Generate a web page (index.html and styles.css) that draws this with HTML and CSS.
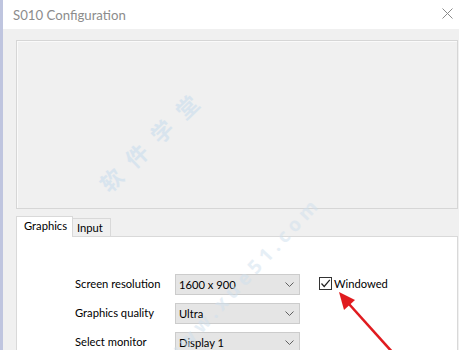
FILE: index.html
```html
<!DOCTYPE html>
<html>
<head>
<meta charset="utf-8">
<link rel="stylesheet" href="styles.css">
</head>
<body>
<div class="window">
  <div class="titlebar">
    <span class="title">S010 Configuration</span>
    <svg class="close" width="11" height="11" viewBox="0 0 11 11"><path d="M0.5 0.5 L10.5 10.5 M10.5 0.5 L0.5 10.5" stroke="#8a8a8a" stroke-width="1" fill="none"/></svg>
  </div>
  <div class="client">
    <div class="preview"></div>
    <div class="tabs">
      <div class="tabstrip">
        <div class="tab active">Graphics</div>
        <div class="tab">Input</div>
      </div>
      <div class="page">
        <div class="form">
          <span class="label">Screen resolution</span>
          <div class="combo"><span>1600 x 900</span><svg width="9" height="5" viewBox="0 0 9 5"><path d="M0.5 0.5 L4.5 4.5 L8.5 0.5" stroke="#606060" fill="none"/></svg></div>
          <label class="check"><span class="box"><svg width="11" height="11" viewBox="0 0 11 11"><path d="M1.5 5.5 L4.2 8.5 L9.8 1.8" stroke="#222" stroke-width="1.2" fill="none"/></svg></span>Windowed</label>
          <span class="label">Graphics quality</span>
          <div class="combo"><span>Ultra</span><svg width="9" height="5" viewBox="0 0 9 5"><path d="M0.5 0.5 L4.5 4.5 L8.5 0.5" stroke="#606060" fill="none"/></svg></div>
          <span></span>
          <span class="label">Select monitor</span>
          <div class="combo"><span>Display 1</span><svg width="9" height="5" viewBox="0 0 9 5"><path d="M0.5 0.5 L4.5 4.5 L8.5 0.5" stroke="#606060" fill="none"/></svg></div>
          <span></span>
        </div>
      </div>
    </div>
  </div>
  <div class="wm wm-cn">软件学堂</div>
  <div class="wm wm-url">www.xue51.com</div>
  <svg class="arrow" width="459" height="350" viewBox="0 0 459 350">
    <line x1="394" y1="354" x2="349" y2="304" stroke="#e01b1f" stroke-width="2.6"/>
    <polygon points="339,292 355,300 344,310" fill="#e01b1f"/>
  </svg>
</div>
</body>
</html>
```
FILE: styles.css
```css
html, body {
  margin: 0;
  padding: 0;
}
body {
  width: 459px;
  height: 350px;
  overflow: hidden;
  font-family: "Segoe UI", Lato, "Noto Sans", sans-serif;
  font-size: 11.2px;
  color: #000;
  background: #fff;
}
.window {
  position: relative;
  height: 350px;
  border-left: 3px solid #bfc5df;
  background: #f0f0f0;
  display: flex;
  flex-direction: column;
  overflow: hidden;
}
.titlebar {
  height: 29px;
  flex: none;
  background: #fff;
  display: flex;
  align-items: center;
  justify-content: space-between;
  padding: 0 6px 0 10px;
}
.title {
  font-size: 13.2px;
  color: #8c8c8c;
}
.close {
  margin-top: -2px;
}
.client {
  flex: 1;
  display: flex;
  flex-direction: column;
  padding: 11px 1px 0 13px;
}
.preview {
  height: 169px;
  flex: none;
  box-sizing: border-box;
  border: 1px solid #d6d6d6;
  background: #f0f0f0;
  box-shadow: inset 1px 1px 0 #fafafa;
}
.tabs {
  margin-top: 7px;
  flex: 1;
  display: flex;
  flex-direction: column;
}
.tabstrip {
  display: flex;
  align-items: flex-end;
  height: 21px;
  margin-bottom: -1px;
  position: relative;
  z-index: 1;
}
.tab {
  box-sizing: border-box;
  border: 1px solid #d9d9d9;
  border-bottom: none;
  height: 18px;
  width: 39px;
  padding: 0 0 0 4px;
  background: #f0f0f0;
  display: flex;
  align-items: center;
  margin-left: -1px;
  margin-bottom: 1px;
}
.tab.active {
  height: 21px;
  width: 57px;
  margin-left: 0;
  margin-bottom: 0;
  background: #fff;
  padding: 0 0 3px 7px;
}
.page {
  flex: 1;
  background: #fff;
  border: 1px solid #d9d9d9;
  padding: 37px 0 0 58px;
}
.form {
  display: grid;
  grid-template-columns: 100px 125px auto;
  grid-auto-rows: 21px;
  row-gap: 8px;
  column-gap: 0;
  align-items: center;
}
.label {
  white-space: nowrap;
  margin-top: -2px;
}
.combo {
  box-sizing: border-box;
  height: 21px;
  border: 1px solid #cccccc;
  background: #e5e5e5;
  display: flex;
  align-items: center;
  justify-content: space-between;
  padding: 0 5px 0 3px;
}
.check {
  display: flex;
  align-items: center;
  margin-left: 19px;
  margin-top: -3px;
  gap: 2px;
}
.box {
  box-sizing: border-box;
  width: 13px;
  height: 13px;
  border: 1px solid #333;
  background: #fff;
  display: flex;
  align-items: center;
  justify-content: center;
}
.wm {
  position: absolute;
  pointer-events: none;
  white-space: nowrap;
  color: #cfe0ee;
  font-weight: bold;
  opacity: 0.7;
}
.wm-cn {
  left: 80px;
  top: 122px;
  font-family: "Noto Sans CJK SC", sans-serif;
  font-size: 22px;
  letter-spacing: 13px;
  transform: rotate(-44deg);
  transform-origin: center;
}
.wm-url {
  left: 129px;
  top: 267px;
  font-family: "Noto Sans", sans-serif;
  font-size: 19px;
  letter-spacing: 5px;
  transform: rotate(-47deg);
  opacity: 0.5;
}
.arrow {
  position: absolute;
  left: -3px;
  top: 0;
  pointer-events: none;
}
```
